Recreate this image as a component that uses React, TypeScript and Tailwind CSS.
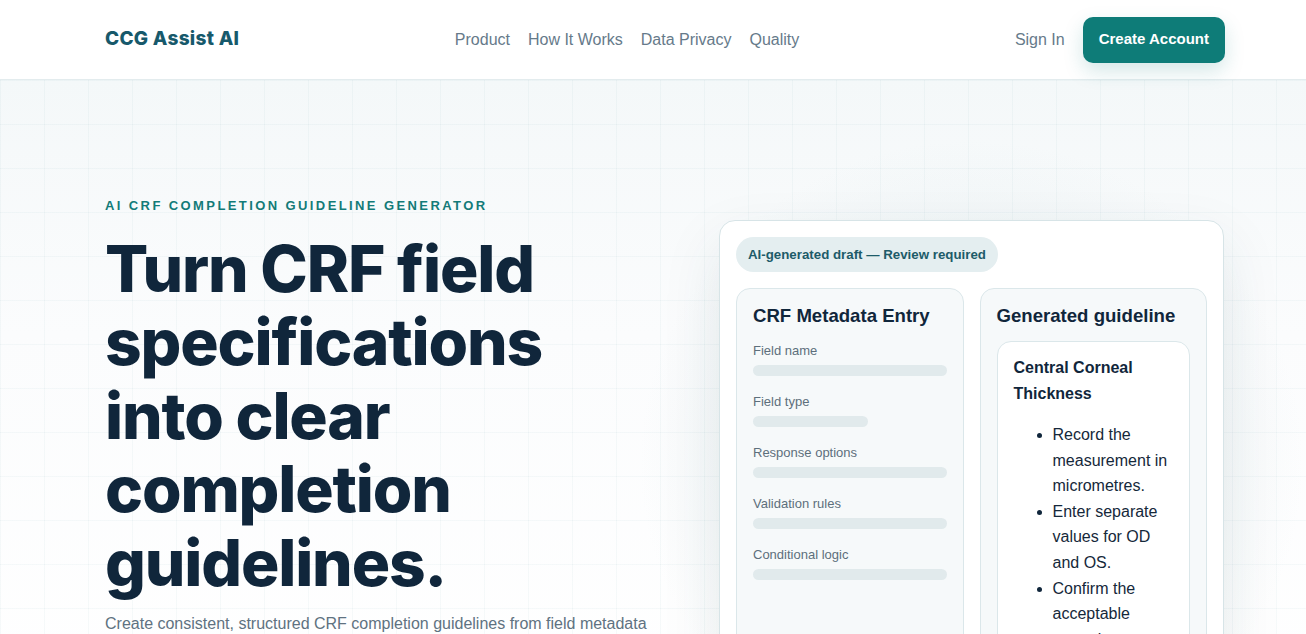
const sans = "font-['Liberation_Sans',Arial,sans-serif]";
const display = "font-['Inter','Liberation_Sans',sans-serif]";

const navLinks = ["Product", "How It Works", "Data Privacy", "Quality"];

const fields = [
  { label: "Field name", w: "w-full" },
  { label: "Field type", w: "w-[115px]" },
  { label: "Response options", w: "w-full" },
  { label: "Validation rules", w: "w-full" },
  { label: "Conditional logic", w: "w-full" },
];

const steps = [
  "Record the measurement in micrometres.",
  "Enter separate values for OD and OS.",
  "Confirm the acceptable range is met before saving.",
];

function Header() {
  return (
    <header className="relative z-10 h-[80px] border-b border-[#e3ecee] bg-white">
      <div className="flex h-full items-center justify-between pl-[105px] pr-[81px]">
        <div className={`${display} text-[19px] font-extrabold tracking-[0.015em] text-[#17596b]`}>CCG Assist AI</div>
        <nav className="flex items-center gap-[18px] text-[16px] text-[#667a8a]">
          {navLinks.map((l) => (
            <a key={l} href="#" className="hover:text-[#17596b]">{l}</a>
          ))}
        </nav>
        <div className="flex items-center gap-[18px]">
          <a href="#" className="text-[16px] text-[#667a8a]">Sign In</a>
          <button className="h-[46px] rounded-[10px] bg-[#0e7c78] px-4 text-[15px] font-bold text-white shadow-[0_8px_20px_rgba(14,124,120,0.18)]">
            Create Account
          </button>
        </div>
      </div>
    </header>
  );
}

function MetadataPanel() {
  return (
    <div className="h-[400px] rounded-[14px] border border-[#dbe7ea] bg-[#f6f9fa] p-4">
      <h3 className="text-[18.6px] font-bold leading-[22px] text-[#10263b]">CRF Metadata Entry</h3>
      <div className="mt-[16px] flex flex-col gap-[18px]">
        {fields.map((f) => (
          <div key={f.label}>
            <div className="text-[13px] leading-[16px] text-[#5d6f7c]">{f.label}</div>
            <div className={`mt-[6px] h-[11px] rounded-full bg-[#e1eaec] ${f.w}`} />
          </div>
        ))}
      </div>
    </div>
  );
}

function GuidelinePanel() {
  return (
    <div className="h-[400px] rounded-[14px] border border-[#dbe7ea] bg-[#f6f9fa] p-4">
      <h3 className="text-[18.6px] font-bold leading-[22px] text-[#10263b]">Generated guideline</h3>
      <div className="mt-[14px] rounded-[14px] border border-[#dbe7ea] bg-white px-4 pt-[13px] pb-4">
        <div className="text-[16px] font-bold leading-[26px] text-[#10263b]">Central Corneal Thickness</div>
        <ul className="mt-[15px] list-disc pl-[39px] text-[16px] leading-[25.6px] text-[#15283a] marker:text-[#10263b]">
          {steps.map((s) => (
            <li key={s}>{s}</li>
          ))}
        </ul>
      </div>
    </div>
  );
}

function PreviewCard() {
  return (
    <div className="relative">
      <div className="pointer-events-none absolute -inset-[80px] rounded-full bg-[radial-gradient(closest-side,rgba(180,205,210,0.35),rgba(255,255,255,0))]" />
      <div className="relative rounded-[16px] border border-[#d7e4e7] bg-white p-4 shadow-[0_24px_60px_rgba(30,70,80,0.10)]">
        <span className="inline-block rounded-full bg-[#e4eef0] px-3 py-[9px] text-[13.3px] font-bold leading-[17px] text-[#1d5b69]">
          AI-generated draft — Review required
        </span>
        <div className="mt-[16px] grid grid-cols-2 gap-[16px]">
          <MetadataPanel />
          <GuidelinePanel />
        </div>
      </div>
    </div>
  );
}

export default function App() {
  return (
    <div className={`${sans} h-screen overflow-hidden bg-white`}>
      <Header />
      <main className="relative h-full bg-[linear-gradient(180deg,#f4f8f9_0%,#fbfcfd_40%,#ffffff_100%)]">
        <div className="pointer-events-none absolute inset-0 bg-[linear-gradient(rgba(20,110,120,0.035)_1px,transparent_1px),linear-gradient(90deg,rgba(20,110,120,0.035)_1px,transparent_1px)] bg-[size:44px_44px]" />
        <div className="relative grid grid-cols-[1fr_505px] gap-10 pl-[105px] pr-[82px] pt-[119px]">
          <div>
            <p className="-mt-[3px] text-[13px] font-bold uppercase tracking-[0.185em] text-[#137b78]">
              AI CRF Completion Guideline Generator
            </p>
            <h1 className={`${display} mt-[16px] text-[64px] font-extrabold leading-[73.6px] tracking-[-0.018em] text-[#10263b]`}>
              Turn CRF field<br />specifications<br />into clear<br />completion<br />guidelines.
            </h1>
            <p className="mt-[12px] max-w-[548px] text-[16px] leading-[26px] text-[#5f7281]">
              Create consistent, structured CRF completion guidelines from field metadata in minutes, ready for expert review.
            </p>
          </div>
          <div className="pt-[21px]">
            <PreviewCard />
          </div>
        </div>
      </main>
    </div>
  );
}
